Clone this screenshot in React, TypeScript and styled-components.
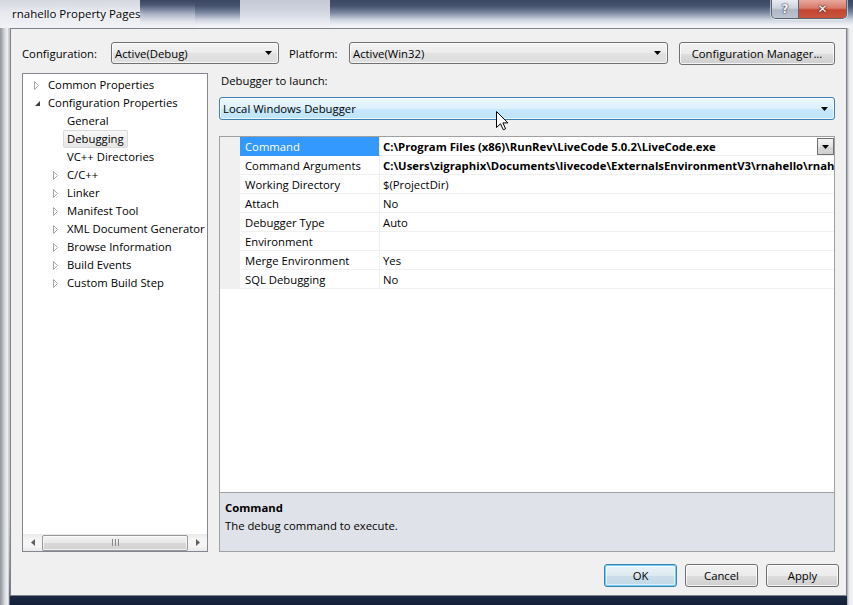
import React from 'react';
import styled, { createGlobalStyle, css } from 'styled-components';

const FONT = `"Open Sans", "Noto Sans", "Liberation Sans", sans-serif`;
const FS = '11.3px';

const Global = createGlobalStyle`
  html, body { margin: 0; padding: 0; width: 853px; height: 605px; overflow: hidden; background: #6b7688; }
  * { box-sizing: border-box; }
`;

const Window = styled.div`
  position: relative;
  width: 853px;
  height: 605px;
  display: grid;
  grid-template-rows: 28px 568px 9px;
  grid-template-columns: 10px 837px 6px;
  font-family: ${FONT};
  font-size: ${FS};
  color: #000;
  background:
    linear-gradient(to right, #8e949c 0, #b9bdc3 3px, #dcdee2 5px, #eef0f2 8px, #b0b4ba 9px, transparent 10px) 0 0 / 10px 100% no-repeat,
    linear-gradient(to right, #9ea3aa 0, #e8eaee 2px, #f4f5f7 6px) 847px 0 / 6px 100% no-repeat,
    linear-gradient(to bottom, #cfd2d7 0, #d9dbdf 85%, #6e7788 94%, #1d2b45 98%, #14203a 100%);
`;

const TitleBar = styled.div`
  grid-column: 1 / -1;
  display: flex;
  justify-content: space-between;
  align-items: flex-start;
  background:
    linear-gradient(to bottom, #d4d8df 0, #e6e8ee 12px, #f1f2f6 27px) 0 0 / 140px 100% no-repeat,
    linear-gradient(to bottom, #3a4660 0, #4c5876 5px, #aab2c4 14px, #e6e8ee 22px, #f2f3f7 27px) 140px 0 / 55px 100% no-repeat,
    linear-gradient(to bottom, #c4c9d6 0, #cfd3de 10px, #e3e6ee 20px, #f2f3f7 27px) 240px 0 / 90px 100% no-repeat,
    linear-gradient(to bottom, #3c4863 0, #46536f 6px, #7e8aa3 13px, #d0d5e0 20px, #eff1f6 25px, #f4f5f8 27px);
`;

const TitleText = styled.div`
  padding: 5px 0 0 12px;
  font-size: 11.5px;
  line-height: 18px;
  color: #000;
  text-shadow: 0 0 6px #fff, 0 0 3px #fff;
`;

const CaptionGroup = styled.div`
  display: flex;
  margin-right: 6px;
  border: 1px solid #5a6472;
  border-top: none;
  border-radius: 0 0 5px 5px;
  overflow: hidden;
  box-shadow: 0 0 0 1px rgba(255,255,255,0.55);
`;

const CaptionButton = styled.div<{ $close?: boolean }>`
  height: 18px;
  width: ${p => (p.$close ? '47px' : '27px')};
  display: flex;
  align-items: center;
  justify-content: center;
  font-family: "DejaVu Sans", sans-serif;
  font-weight: bold;
  font-size: 12px;
  color: #fff;
  ${p =>
    p.$close
      ? css`
          background: linear-gradient(to bottom, #e8a89c 0, #d77b6a 45%, #c24530 55%, #c9563f 100%);
          text-shadow: 0 0 2px #3a0a00, 0 0 1px #3a0a00;
        `
      : css`
          background: linear-gradient(to bottom, #e9ecf1 0, #cdd3dc 45%, #aeb7c4 55%, #bcc4cf 100%);
          border-right: 1px solid #5a6472;
          color: #f4f6f8;
          text-shadow: 0 0 2px #2b3440, 0 0 1px #2b3440;
        `}
`;

const Client = styled.div`
  grid-row: 2;
  grid-column: 2;
  background: #f0f0f0;
  border: 1px solid #7d828b;
  padding: 13px 11px 8px 11px;
  display: flex;
  flex-direction: column;
`;

const TopRow = styled.div`
  height: 22px;
  display: flex;
  align-items: center;
`;

const FieldLabel = styled.div<{ $w: number }>`
  width: ${p => p.$w}px;
  flex: none;
  white-space: nowrap;
`;

const Select = styled.div<{ $w: number; $hot?: boolean }>`
  width: ${p => (p.$w ? `${p.$w}px` : 'auto')};
  height: ${p => (p.$hot ? '23px' : '22px')};
  flex: none;
  display: flex;
  align-items: center;
  justify-content: space-between;
  padding: 0 6px 0 3px;
  border-radius: 3px;
  border: 1px solid ${p => (p.$hot ? '#3c7fb1' : '#707070')};
  background: ${p =>
    p.$hot
      ? 'linear-gradient(to bottom, #ecf7fd 0, #dcf0fc 50%, #c7e7fc 52%, #bde4fb 100%)'
      : 'linear-gradient(to bottom, #f4f4f4 0, #ebebeb 50%, #e2e2e2 52%, #dedede 100%)'};
  box-shadow: inset 0 0 0 1px rgba(255, 255, 255, 0.7);
`;

const DownArrow = () => (
  <svg width="7" height="4" viewBox="0 0 7 4">
    <path d="M0 0 H7 L3.5 4 Z" fill="#000" />
  </svg>
);

const Button = styled.div<{ $w: number; $default?: boolean }>`
  width: ${p => p.$w}px;
  height: 23px;
  flex: none;
  display: flex;
  align-items: center;
  justify-content: center;
  border-radius: 3px;
  border: 1px solid ${p => (p.$default ? '#3c7fb1' : '#707070')};
  background: ${p =>
    p.$default
      ? 'linear-gradient(to bottom, #eaf3f8 0, #dde9f1 50%, #cbdeea 52%, #c2d8e6 100%)'
      : 'linear-gradient(to bottom, #f2f2f2 0, #ebebeb 50%, #dddddd 52%, #cfcfcf 100%)'};
  box-shadow: ${p =>
    p.$default ? 'inset 0 0 0 1px #6dd1f6, inset 0 0 0 2px rgba(255,255,255,0.5)' : 'inset 0 0 0 1px rgba(255,255,255,0.75)'};
`;

const Main = styled.div`
  margin-top: 9px;
  height: 480px;
  display: flex;
  gap: 11px;
`;

const TreePanel = styled.div`
  width: 186px;
  flex: none;
  background: #fff;
  border: 1px solid #828790;
  display: flex;
  flex-direction: column;
`;

const TreeList = styled.div`
  flex: 1;
  padding-top: 2px;
`;

const TreeItem = styled.div<{ $level: number }>`
  height: 18px;
  display: flex;
  align-items: center;
  padding-left: ${p => 8 + p.$level * 19}px;
  white-space: nowrap;
`;

const ArrowSlot = styled.div`
  width: 17px;
  flex: none;
  display: flex;
  align-items: center;
  padding-left: 3px;
`;

const ItemText = styled.span<{ $selected?: boolean }>`
  margin-left: -4px;
  padding: 0 3px;
  height: 18px;
  line-height: 16px;
  border: 1px solid transparent;
  border-radius: 2px;
  ${p =>
    p.$selected &&
    css`
      background: linear-gradient(to bottom, #f7f7f7 0, #e6e6e6 100%);
      border-color: #d9d9d9;
    `}
`;

const Collapsed = () => (
  <svg width="6" height="9" viewBox="0 0 6 9">
    <path d="M0.5 0.5 L4.5 4.5 L0.5 8.5 Z" fill="#fff" stroke="#a6a6a6" />
  </svg>
);

const Expanded = () => (
  <svg width="7" height="7" viewBox="0 0 7 7">
    <path d="M6 1 L6 6 L1 6 Z" fill="#3d3d3d" />
  </svg>
);

const HScroll = styled.div`
  height: 17px;
  flex: none;
  display: flex;
  align-items: center;
  background: linear-gradient(to bottom, #e9e9e9 0, #f5f5f5 30%, #f5f5f5 70%, #e9e9e9 100%);
`;

const ScrollArrow = styled.div`
  width: 19px;
  height: 17px;
  flex: none;
  display: flex;
  align-items: center;
  justify-content: center;
`;

const Thumb = styled.div`
  flex: 1;
  height: 16px;
  border: 1px solid #979797;
  border-radius: 2px;
  background: linear-gradient(to bottom, #f3f3f3 0, #e8e8e8 50%, #d8d8d8 52%, #d2d2d2 100%);
  box-shadow: inset 0 0 0 1px rgba(255,255,255,0.7);
  display: flex;
  align-items: center;
  justify-content: center;
`;

const RightPanel = styled.div`
  flex: 1;
  display: flex;
  flex-direction: column;
  min-width: 0;
`;

const SectionLabel = styled.div`
  height: 17px;
  line-height: 15px;
  padding-left: 2px;
  margin-bottom: 7px;
`;

const GridBox = styled.div`
  margin-top: 16px;
  flex: 1;
  display: flex;
  flex-direction: column;
  border: 1px solid #a0a0a0;
  min-height: 0;
`;

const GridBody = styled.div`
  flex: 1;
  background: #fff;
  overflow: hidden;
`;

const PropRow = styled.div`
  display: grid;
  grid-template-columns: 20px 140px 1fr;
  height: 19px;
`;

const Gutter = styled.div`
  background: #f0f0f0;
`;

const NameCell = styled.div<{ $selected?: boolean }>`
  border-right: 1px solid #f0f0f0;
  border-bottom: 1px solid #f0f0f0;
  padding: 0.5px 0 0 5px;
  line-height: 17px;
  white-space: nowrap;
  ${p =>
    p.$selected &&
    css`
      background: #3399ff;
      color: #fff;
      border-bottom-color: #3399ff;
    `}
`;

const ValueCell = styled.div<{ $bold?: boolean }>`
  position: relative;
  border-bottom: 1px solid #f0f0f0;
  padding: 0.5px 0 0 3px;
  line-height: 17px;
  white-space: nowrap;
  overflow: hidden;
  font-weight: ${p => (p.$bold ? 700 : 400)};
`;

const CellDrop = styled.div`
  position: absolute;
  right: 0;
  top: 1px;
  width: 17px;
  height: 17px;
  border: 1px solid #707070;
  background: linear-gradient(to bottom, #f4f4f4 0, #e4e4e4 50%, #d6d6d6 52%, #d0d0d0 100%);
  display: flex;
  align-items: center;
  justify-content: center;
`;

const Description = styled.div`
  height: 59px;
  flex: none;
  border-top: 1px solid #a0a0a0;
  background: #dfe2e8;
  padding: 6px 0 0 5px;
  line-height: 17.5px;
`;

const DescTitle = styled.div`
  font-weight: 700;
`;

const ButtonRow = styled.div`
  margin-top: 12px;
  margin-right: -4px;
  display: flex;
  justify-content: flex-end;
  gap: 8px;
`;

const Cursor = styled.svg`
  position: absolute;
  left: 496px;
  top: 111px;
`;

type TreeNode = { label: string; level: number; arrow?: 'c' | 'e'; selected?: boolean };

const tree: TreeNode[] = [
  { label: 'Common Properties', level: 0, arrow: 'c' },
  { label: 'Configuration Properties', level: 0, arrow: 'e' },
  { label: 'General', level: 1 },
  { label: 'Debugging', level: 1, selected: true },
  { label: 'VC++ Directories', level: 1 },
  { label: 'C/C++', level: 1, arrow: 'c' },
  { label: 'Linker', level: 1, arrow: 'c' },
  { label: 'Manifest Tool', level: 1, arrow: 'c' },
  { label: 'XML Document Generator', level: 1, arrow: 'c' },
  { label: 'Browse Information', level: 1, arrow: 'c' },
  { label: 'Build Events', level: 1, arrow: 'c' },
  { label: 'Custom Build Step', level: 1, arrow: 'c' },
];

type Prop = { name: string; value: string; bold?: boolean; selected?: boolean; drop?: boolean };

const props: Prop[] = [
  { name: 'Command', value: 'C:\\Program Files (x86)\\RunRev\\LiveCode 5.0.2\\LiveCode.exe', bold: true, selected: true, drop: true },
  { name: 'Command Arguments', value: 'C:\\Users\\zigraphix\\Documents\\livecode\\ExternalsEnvironmentV3\\rnahello\\rnahe', bold: true },
  { name: 'Working Directory', value: '$(ProjectDir)' },
  { name: 'Attach', value: 'No' },
  { name: 'Debugger Type', value: 'Auto' },
  { name: 'Environment', value: '' },
  { name: 'Merge Environment', value: 'Yes' },
  { name: 'SQL Debugging', value: 'No' },
];

export default function App() {
  return (
    <>
      <Global />
      <Window>
        <TitleBar>
          <TitleText>rnahello Property Pages</TitleText>
          <CaptionGroup>
            <CaptionButton>?</CaptionButton>
            <CaptionButton $close>✕</CaptionButton>
          </CaptionGroup>
        </TitleBar>
        <div />
        <Client>
          <TopRow>
            <FieldLabel $w={89}>Configuration:</FieldLabel>
            <Select $w={168}>
              <span>Active(Debug)</span>
              <DownArrow />
            </Select>
            <FieldLabel $w={60} style={{ marginLeft: 10 }}>Platform:</FieldLabel>
            <Select $w={319}>
              <span>Active(Win32)</span>
              <DownArrow />
            </Select>
            <Button $w={156} style={{ marginLeft: 11 }}>Configuration Manager...</Button>
          </TopRow>
          <Main>
            <TreePanel>
              <TreeList>
                {tree.map(n => (
                  <TreeItem key={n.label} $level={n.level}>
                    <ArrowSlot>{n.arrow === 'c' ? <Collapsed /> : n.arrow === 'e' ? <Expanded /> : null}</ArrowSlot>
                    <ItemText $selected={n.selected}>{n.label}</ItemText>
                  </TreeItem>
                ))}
              </TreeList>
              <HScroll>
                <ScrollArrow>
                  <svg width="4" height="7" viewBox="0 0 4 7"><path d="M4 0 V7 L0 3.5 Z" fill="#606060" /></svg>
                </ScrollArrow>
                <Thumb>
                  <svg width="7" height="7" viewBox="0 0 7 7">
                    <path d="M0.5 0 V7 M3.5 0 V7 M6.5 0 V7" stroke="#8a8a8a" />
                  </svg>
                </Thumb>
                <ScrollArrow>
                  <svg width="4" height="7" viewBox="0 0 4 7"><path d="M0 0 V7 L4 3.5 Z" fill="#606060" /></svg>
                </ScrollArrow>
              </HScroll>
            </TreePanel>
            <RightPanel>
              <SectionLabel>Debugger to launch:</SectionLabel>
              <Select $w={0} $hot>
                <span>Local Windows Debugger</span>
                <DownArrow />
              </Select>
              <GridBox>
                <GridBody>
                  {props.map(p => (
                    <PropRow key={p.name}>
                      <Gutter />
                      <NameCell $selected={p.selected}>{p.name}</NameCell>
                      <ValueCell $bold={p.bold}>
                        {p.value}
                        {p.drop && (
                          <CellDrop>
                            <DownArrow />
                          </CellDrop>
                        )}
                      </ValueCell>
                    </PropRow>
                  ))}
                </GridBody>
                <Description>
                  <DescTitle>Command</DescTitle>
                  <div>The debug command to execute.</div>
                </Description>
              </GridBox>
            </RightPanel>
          </Main>
          <ButtonRow>
            <Button $w={73} $default>OK</Button>
            <Button $w={73}>Cancel</Button>
            <Button $w={73}>Apply</Button>
          </ButtonRow>
        </Client>
        <Cursor width="13" height="20" viewBox="0 0 13 20">
          <path d="M0.5 0.5 L0.5 16.5 L4.5 12.8 L7.3 18.8 L9.6 17.8 L6.9 11.9 L11.9 11.9 Z" fill="#fff" stroke="#000" strokeLinejoin="miter" />
        </Cursor>
      </Window>
    </>
  );
}
